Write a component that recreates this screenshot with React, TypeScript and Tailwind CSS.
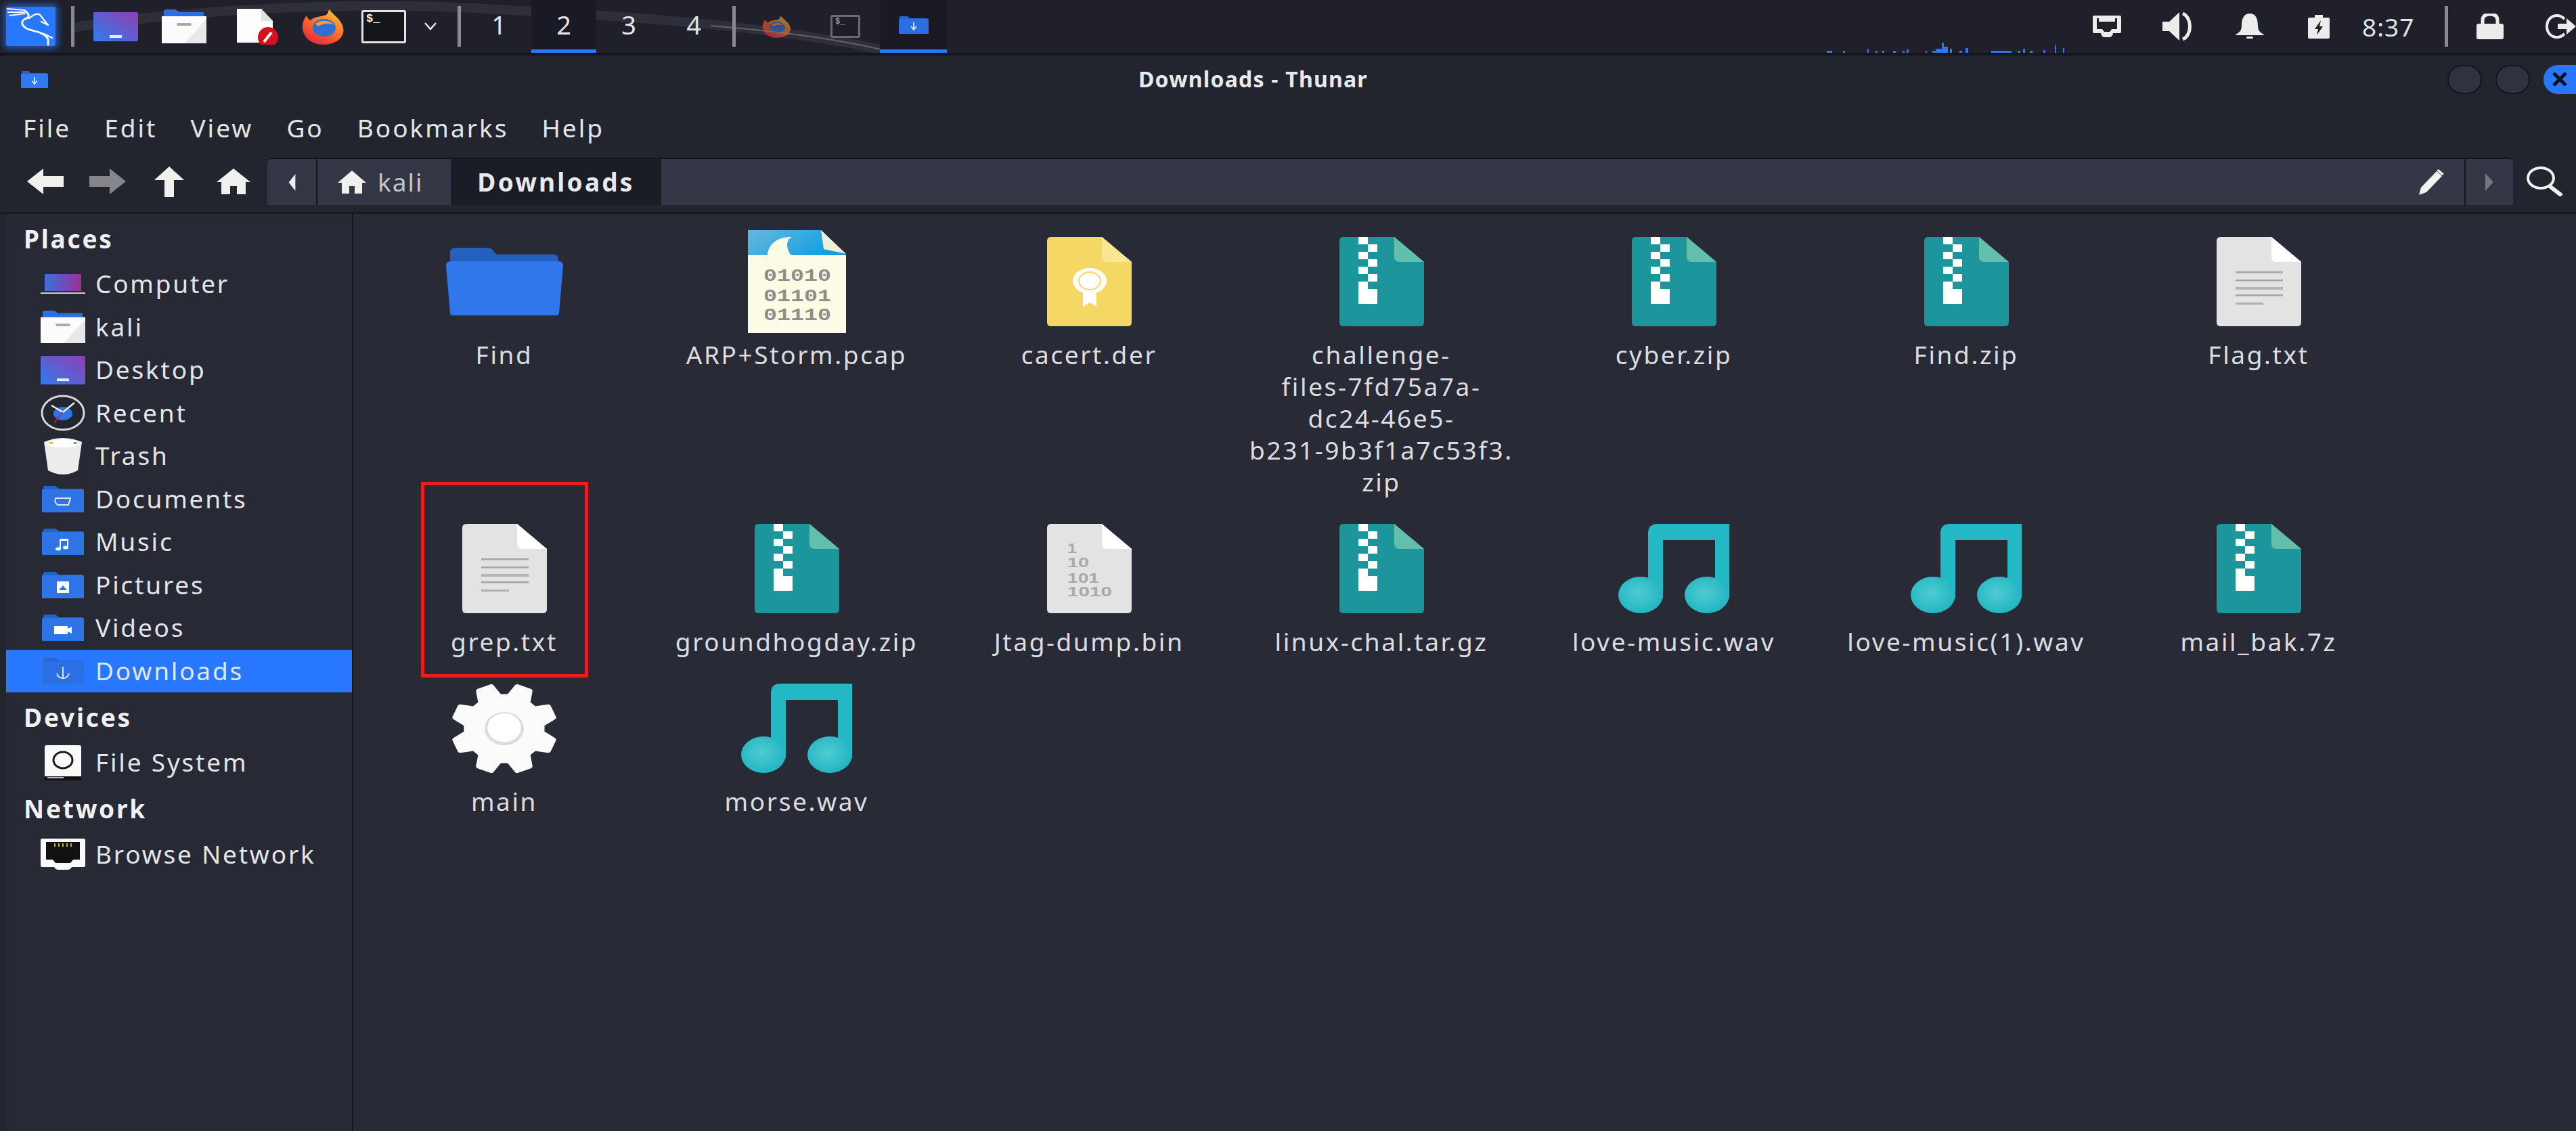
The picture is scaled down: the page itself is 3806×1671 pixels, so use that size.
import React from 'react';

// ---------- small shared icons ----------
const Stretch: React.FC<{ w: number; h: number; vw?: number; vh?: number; className?: string; children: React.ReactNode }> = ({ w, h, vw, vh, className, children }) => (
  <svg width={w} height={h} viewBox={`0 0 ${vw ?? w} ${vh ?? h}`} preserveAspectRatio="none" className={`block shrink-0 ${className ?? ''}`}>
    {children}
  </svg>
);

const KaliLogo = () => (
  <div className="w-[73px] h-[58px] bg-[#2777ff] rounded-[3px] shadow-[0_0_10px_4px_rgba(39,119,255,0.6)] ml-[9px] shrink-0">
    <Stretch w={73} h={58}>
      <g fill="none" stroke="#f4f7ff" strokeLinecap="round" strokeLinejoin="round">
        <path d="M2 3 L28 5 M3 8 L27 8 M5 13 L28 10" strokeWidth="2" />
        <path d="M28 6 C36 12 34 16 28 18 C22 21 22 27 30 32 C40 37 56 36 62 48 L62 56" strokeWidth="3" />
        <path d="M34 17 C42 11 46 9 50 12 L62 27 L52 22 M56 40 L68 46" strokeWidth="2.5" />
      </g>
    </Stretch>
  </div>
);

const Sep = ({ ml }: { ml: string }) => <div className={`w-[5px] h-[60px] bg-[#8a8b90] shrink-0 ${ml}`} />;

const DesktopIcon = ({ w, h }: { w: number; h: number }) => (
  <Stretch w={w} h={h} vw={66} vh={43}>
    <defs>
      <linearGradient id="dsk" x1="0" y1="1" x2="1" y2="0">
        <stop offset="0" stopColor="#2f7cf0" />
        <stop offset="1" stopColor="#8f3fb0" />
      </linearGradient>
    </defs>
    <rect width="66" height="43" rx="2" fill="url(#dsk)" />
    <rect x="24" y="34" width="18" height="4" fill="#e8ecff" />
  </Stretch>
);

const HomeFolder = ({ w, h }: { w: number; h: number }) => (
  <Stretch w={w} h={h} vw={66} vh={50}>
    <path d="M3 12 V3 Q3 0 6 0 H20 L26 4 H62 V12 Z" fill="#2b6fe0" />
    <rect y="10" width="66" height="40" fill="#fbfbfb" />
    <path d="M66 14 V50 H34 Z" fill="#e8e8e8" />
    <rect x="22" y="20" width="22" height="4" rx="2" fill="#a9a9a9" />
  </Stretch>
);

const DocBadge = () => (
  <Stretch w={61} h={53}>
    <path d="M0 0 H36 L53 18 V50 H0 Z" fill="#fdfdfd" />
    <path d="M36 0 L53 18 H36 Z" fill="#e2e2e2" />
    <circle cx="46" cy="42" r="15" fill="#d3121e" />
    <path d="M40 49 L51 35" stroke="#fff" strokeWidth="4" />
  </Stretch>
);

const Firefox = ({ w, h, dim }: { w: number; h: number; dim?: boolean }) => (
  <Stretch w={w} h={h} vw={63} vh={53} className={dim ? 'opacity-60' : ''}>
    <defs>
      <linearGradient id={dim ? 'ffd' : 'ffn'} x1="0.8" y1="0" x2="0.2" y2="1">
        <stop offset="0" stopColor="#ffc93a" />
        <stop offset="0.5" stopColor="#ff6a2a" />
        <stop offset="1" stopColor="#e0263f" />
      </linearGradient>
    </defs>
    <path d="M40 0 C44 8 58 14 61 28 C64 44 48 53 32 53 C14 53 1 42 1 26 C1 20 3 15 7 10 C8 14 11 16 13 17 C18 11 28 12 36 9 C38 7 40 4 40 0 Z" fill={`url(#${dim ? 'ffd' : 'ffn'})`} />
    <ellipse cx="33" cy="28" rx="17" ry="13" fill="#2f6fd8" />
    <path d="M20 22 C28 16 42 16 48 24 C40 20 30 22 24 26 Z" fill="#ff9a2a" />
  </Stretch>
);

const Term = ({ w, h, dim }: { w: number; h: number; dim?: boolean }) => (
  <div style={{ width: w, height: h }} className={`shrink-0 rounded-[3px] border-[3px] ${dim ? 'border-[#6a6b70] bg-[#1d1e26]' : 'border-[#e4e4e4] bg-[#141518]'} relative`}>
    <span className={`absolute left-[4px] top-[1px] font-['Liberation_Mono',monospace] font-bold leading-none ${dim ? 'text-[12px] text-[#9a9a9a]' : 'text-[17px] text-white'}`}>$_</span>
  </div>
);

const DownloadFolder = ({ w, h, dim }: { w: number; h: number; dim?: boolean }) => (
  <Stretch w={w} h={h} vw={44} vh={26}>
    <path d="M1 6 V1 Q1 0 3 0 H13 L16 3 H42 V6 Z" fill={dim ? '#2667d8' : '#2460c8'} />
    <rect y="4" width="44" height="22" rx="1" fill={dim ? '#2a6ee2' : '#2f7af0'} />
    <path d="M22 9 V19 M18 15 L22 20 L26 15" stroke="#cfe0ff" strokeWidth="2" fill="none" />
  </Stretch>
);

const NetIcon = ({ w, h, fill = '#111' }: { w: number; h: number; fill?: string }) => (
  <Stretch w={w} h={h} vw={66} vh={46}>
    <path d="M2 0 H64 Q66 0 66 2 V40 Q66 42 64 42 H46 Q44 46 40 46 H26 Q22 46 20 42 H2 Q0 42 0 40 V2 Q0 0 2 0 Z" fill="#fafafa" />
    <path d="M8 5 H58 V31 H48 L44 36 H22 L18 31 H8 Z" fill={fill} />
    {[20, 26, 32, 38, 44].map((x) => (
      <rect key={x} x={x} y="7" width="2" height="5" fill="#c8a83c" />
    ))}
  </Stretch>
);

const Bars = () => {
  const bars = [[0, 8, 3], [24, 3, 3], [60, 2, 6], [72, 3, 3], [82, 3, 3], [98, 4, 3], [112, 3, 3], [118, 3, 5], [146, 2, 3], [156, 5, 3], [161, 10, 6], [170, 3, 15], [173, 6, 9], [182, 3, 6], [196, 4, 3], [205, 4, 7], [243, 16, 3], [259, 14, 3], [282, 4, 3], [290, 3, 6], [300, 4, 3], [320, 3, 4], [337, 2, 12], [349, 2, 7]];
  return (
    <Stretch w={355} h={78} className="ml-[1300px]">
      {bars.map(([x, w, h]) => (
        <rect key={x} x={x} y={78 - h} width={w} height={h} fill="#2777ff" />
      ))}
    </Stretch>
  );
};

// ---------- big file icons ----------
const FolderBig = () => (
  <Stretch w={173} h={100}>
    <path d="M6 30 V8 Q6 0 14 0 H62 Q68 0 72 8 L76 10 H160 Q166 10 166 20 V30 Z" fill="#2460c0" />
    <path d="M0 26 Q0 20 8 20 H166 Q173 20 173 26 L167 96 Q167 100 163 100 H10 Q6 100 6 96 Z" fill="#3077ec" />
  </Stretch>
);

const Page = ({ body, fold, children }: { body: string; fold: string; children?: React.ReactNode }) => (
  <Stretch w={125} h={132}>
    <path d="M6 0 H81 L125 37 V126 Q125 132 119 132 H6 Q0 132 0 126 V6 Q0 0 6 0 Z" fill={body} />
    <path d="M81 0 L125 37 H89 Q81 37 81 29 Z" fill={fold} />
    {children}
  </Stretch>
);

const TextDoc = () => (
  <Page body="#e3e3e3" fold="#ffffff">
    {[51, 63, 74, 85].map((y) => (
      <rect key={y} x="28" y={y} width="70" height={y === 74 ? 4 : 2.5} fill={y === 74 ? '#b5b5b5' : '#a5a5a5'} />
    ))}
    <rect x="28" y="97" width="41" height="3" fill="#b0b0b0" />
  </Page>
);

const ZipDoc = () => (
  <Page body="#1c959c" fold="#62bfab">
    {[0, 22, 44, 66].map((y) => (
      <rect key={y} x="28" y={y} width="14" height="11" fill="#fff" />
    ))}
    {[11, 33, 55].map((y) => (
      <rect key={y} x="42" y={y} width="14" height="11" fill="#fff" />
    ))}
    <rect x="28" y="77" width="28" height="22" fill="#fff" />
  </Page>
);

const BinDoc = () => (
  <Page body="#e3e3e3" fold="#ffffff">
    <g fontFamily="'Liberation Sans',sans-serif" fontWeight="700" fontSize="20" fill="#a9a9a9">
      <text x="30" y="43" textLength={14} lengthAdjust="spacingAndGlyphs">1</text>
      <text x="30" y="64" textLength={32} lengthAdjust="spacingAndGlyphs">10</text>
      <text x="30" y="87" textLength={47} lengthAdjust="spacingAndGlyphs">101</text>
      <text x="30" y="107" textLength={66} lengthAdjust="spacingAndGlyphs">1010</text>
    </g>
  </Page>
);

const CertDoc = () => (
  <Page body="#f5d863" fold="#f8e692">
    <ellipse cx="63" cy="65" rx="25" ry="19" fill="#fff" />
    <ellipse cx="63" cy="65" rx="16" ry="13" fill="none" stroke="#f5d863" strokeWidth="2" />
    <path d="M53 80 H73 V103 L63 97 L53 103 Z" fill="#fff" />
  </Page>
);

const PcapDoc = () => (
  <Stretch w={145} h={152}>
    <defs>
      <linearGradient id="pc" x1="0" y1="0" x2="1" y2="0.4">
        <stop offset="0" stopColor="#68b7dc" />
        <stop offset="1" stopColor="#12a0e4" />
      </linearGradient>
    </defs>
    <path d="M0 0 H108 L145 37 V152 H0 Z" fill="#fbfbe6" />
    <path d="M0 0 H108 L145 37 H0 Z" fill="url(#pc)" />
    <path d="M108 0 L145 35 L112 28 Z" fill="#f0efdc" />
    <path d="M29 37 C30 20 44 10 65 10 C54 16 58 30 64 37 Z" fill="#fbfbe6" />
    <g fontFamily="'Liberation Mono',monospace" fontWeight="700" fontSize="26" fill="#8d8d8a">
      <text x="23" y="75" textLength={100} lengthAdjust="spacingAndGlyphs">01010</text>
      <text x="23" y="105" textLength={100} lengthAdjust="spacingAndGlyphs">01101</text>
      <text x="23" y="133" textLength={100} lengthAdjust="spacingAndGlyphs">01110</text>
    </g>
  </Stretch>
);

const MusicDoc = ({ id }: { id: string }) => (
  <Stretch w={164} h={132}>
    <defs>
      <radialGradient id={id} cx="0.45" cy="0.45" r="0.6">
        <stop offset="0" stopColor="#4fcbd3" />
        <stop offset="1" stopColor="#1fb4c0" />
      </radialGradient>
    </defs>
    <path d="M44 110 V14 Q44 0 58 0 H164 V110 H143 V24 H66 V110 Z" fill="#22b9c4" />
    <ellipse cx="33" cy="105" rx="33" ry="27" fill={`url(#${id})`} />
    <ellipse cx="131" cy="105" rx="33" ry="27" fill={`url(#${id})`} />
  </Stretch>
);

const gearPath = (() => {
  const pts: string[] = [];
  const teeth = 8;
  for (let i = 0; i < teeth; i++) {
    const a = (i / teeth) * Math.PI * 2 + Math.PI / 8;
    const step = (Math.PI * 2) / teeth;
    const rows: [number, number][] = [[-0.34, 35], [-0.17, 47], [0.17, 47], [0.34, 35]];
    rows.forEach(([o, r]) => {
      const t = a + o * step;
      pts.push(`${(50 + r * Math.cos(t)).toFixed(1)} ${(50 + r * Math.sin(t)).toFixed(1)}`);
    });
  }
  return `M${pts.join(' L')} Z`;
})();

const Gear = () => (
  <Stretch w={160} h={137} vw={100} vh={100}>
    <path d={gearPath} fill="#fbfbfb" stroke="#fbfbfb" strokeWidth="5" strokeLinejoin="round" />
    <circle cx="50" cy="50" r="18" fill="#dcdcdc" />
    <circle cx="50" cy="49" r="15.5" fill="#fff" />
  </Stretch>
);

const files: { name: string; icon: React.ReactNode; marked?: boolean }[] = [
  { name: 'Find', icon: <FolderBig /> },
  { name: 'ARP+Storm.pcap', icon: <PcapDoc /> },
  { name: 'cacert.der', icon: <CertDoc /> },
  { name: 'challenge-\nfiles-7fd75a7a-\ndc24-46e5-\nb231-9b3f1a7c53f3.\nzip', icon: <ZipDoc /> },
  { name: 'cyber.zip', icon: <ZipDoc /> },
  { name: 'Find.zip', icon: <ZipDoc /> },
  { name: 'Flag.txt', icon: <TextDoc /> },
  { name: 'grep.txt', icon: <TextDoc />, marked: true },
  { name: 'groundhogday.zip', icon: <ZipDoc /> },
  { name: 'Jtag-dump.bin', icon: <BinDoc /> },
  { name: 'linux-chal.tar.gz', icon: <ZipDoc /> },
  { name: 'love-music.wav', icon: <MusicDoc id="mu1" /> },
  { name: 'love-music(1).wav', icon: <MusicDoc id="mu2" /> },
  { name: 'mail_bak.7z', icon: <ZipDoc /> },
  { name: 'main', icon: <Gear /> },
  { name: 'morse.wav', icon: <MusicDoc id="mu3" /> },
];

// ---------- sidebar ----------
const SideFolder = ({ glyph }: { glyph: React.ReactNode }) => (
  <Stretch w={62} h={39} vw={62} vh={39}>
    <path d="M2 6 V2 Q2 0 4 0 H20 L25 4 H60 V8 H2 Z" fill="#2563cc" />
    <rect y="5" width="62" height="34" rx="1" fill="#2f74e6" />
    {glyph}
  </Stretch>
);

const places: { label: string; icon: React.ReactNode; active?: boolean }[] = [
  {
    label: 'Computer',
    icon: (
      <Stretch w={66} h={30}>
        <defs>
          <linearGradient id="cmp" x1="0" y1="0" x2="1" y2="0">
            <stop offset="0" stopColor="#3c6fdc" />
            <stop offset="1" stopColor="#9a3294" />
          </linearGradient>
        </defs>
        <rect x="6" y="0" width="54" height="25" fill="url(#cmp)" />
        <rect y="27" width="66" height="2" fill="#cfcfd2" />
      </Stretch>
    ),
  },
  { label: 'kali', icon: <HomeFolder w={66} h={48} /> },
  { label: 'Desktop', icon: <DesktopIcon w={66} h={42} /> },
  {
    label: 'Recent',
    icon: (
      <Stretch w={66} h={54} vw={66} vh={54}>
        <ellipse cx="33" cy="27" rx="31" ry="25" fill="#23252f" stroke="#d8d8d8" strokeWidth="3" />
        <ellipse cx="33" cy="28" rx="14" ry="10" fill="#2f74e6" />
        <path d="M16 16 L33 26 L50 12" stroke="#eee" strokeWidth="2.5" fill="none" />
        <path d="M33 26 L20 42" stroke="#b02a3a" strokeWidth="1.5" />
      </Stretch>
    ),
  },
  {
    label: 'Trash',
    icon: (
      <Stretch w={56} h={54} vw={56} vh={54}>
        <path d="M0 6 Q28 -6 56 6 L50 48 Q28 60 6 48 Z" fill="#ececea" />
        <ellipse cx="28" cy="8" rx="24" ry="6" fill="#fff" />
        <rect x="8" y="6" width="5" height="3" fill="#e0c040" />
        <rect x="44" y="6" width="4" height="3" fill="#3cb0b8" />
      </Stretch>
    ),
  },
  {
    label: 'Documents',
    icon: <SideFolder glyph={<path d="M20 18 H42 L39 28 H23 Q18 24 20 18 Z" fill="none" stroke="#d8e4ff" strokeWidth="2" />} />,
  },
  {
    label: 'Music',
    icon: (
      <SideFolder
        glyph={
          <g fill="#fff">
            <rect x="26" y="16" width="2" height="14" />
            <rect x="37" y="16" width="2" height="12" />
            <rect x="26" y="15" width="13" height="3" />
            <ellipse cx="24" cy="30" rx="4" ry="2.5" />
            <ellipse cx="35" cy="28" rx="4" ry="2.5" />
          </g>
        }
      />
    ),
  },
  {
    label: 'Pictures',
    icon: (
      <SideFolder
        glyph={
          <g>
            <rect x="22" y="14" width="18" height="17" fill="#fff" />
            <path d="M25 27 L31 20 L37 27 Z" fill="#2f74e6" />
          </g>
        }
      />
    ),
  },
  {
    label: 'Videos',
    icon: (
      <SideFolder
        glyph={
          <g fill="#fff">
            <rect x="18" y="17" width="20" height="12" />
            <path d="M38 21 L44 18 V28 L38 25 Z" />
          </g>
        }
      />
    ),
  },
  {
    label: 'Downloads',
    active: true,
    icon: (
      <Stretch w={62} h={39} vw={62} vh={39}>
        <path d="M2 6 V2 Q2 0 4 0 H20 L25 4 H60 V8 H2 Z" fill="#2a66d2" />
        <rect y="5" width="62" height="34" rx="1" fill="#2c6fe4" />
        <path d="M31 13 V29 M22 23 Q24 30 31 30 Q38 30 40 23" stroke="#d8e4ff" strokeWidth="2" fill="none" />
      </Stretch>
    ),
  },
];

const SideRow = ({ label, icon, active }: { label: string; icon: React.ReactNode; active?: boolean }) => (
  <div className={`h-[63.5px] flex items-center pl-[51px] ${active ? 'bg-[#2777ff]' : ''}`}>
    <div className="w-[66px] flex justify-center shrink-0">{icon}</div>
    <span className="ml-[15px] pb-[2px] text-[37px] tracking-[2.8px] leading-none text-[#e4e5e8]">{label}</span>
  </div>
);

const SideHead = ({ label }: { label: string }) => (
  <div className="h-[72px] flex items-center pl-[26px] text-[37px] tracking-[2.8px] font-bold leading-none text-[#f1f1f3]">{label}</div>
);

const Crumb = ({ children, className }: { children: React.ReactNode; className: string }) => (
  <div className={`h-full flex items-center shrink-0 ${className}`}>{children}</div>
);

export default function App() {
  return (
    <div className="w-[3806px] h-[1671px] overflow-hidden flex flex-col bg-[#23252e] font-['Noto_Sans',sans-serif] text-[#e4e5e8]">
      {/* top panel */}
      <div className="relative h-[78px] shrink-0 bg-[#1f2029] flex items-center">
        <svg width="1400" height="78" className="absolute left-0 top-0">
          <path d="M110 40 C300 12 550 0 750 15 C950 25 1150 40 1310 75" fill="none" stroke="#ffffff" strokeOpacity="0.07" strokeWidth="14" />
          <path d="M1050 38 C1150 46 1240 58 1310 75" fill="none" stroke="#ffffff" strokeOpacity="0.25" strokeWidth="2" />
        </svg>
        <div className="relative flex items-center h-full w-full">
          <KaliLogo />
          <Sep ml="ml-[23px]" />
          <div className="ml-[28px]"><DesktopIcon w={66} h={43} /></div>
          <div className="ml-[35px]"><HomeFolder w={66} h={50} /></div>
          <div className="ml-[45px]"><DocBadge /></div>
          <div className="ml-[35px]"><Firefox w={63} h={53} /></div>
          <div className="ml-[25px]"><Term w={66} h={49} /></div>
          <svg width="20" height="12" viewBox="0 0 20 12" className="ml-[26px] shrink-0">
            <path d="M2 1 L10 10 L18 1" fill="none" stroke="#e6e6e6" strokeWidth="2.5" />
          </svg>
          <Sep ml="ml-[30px]" />
          <div className="ml-[8px] flex h-full text-[38px]">
            {['1', '2', '3', '4'].map((n) => (
              <div key={n} className={`w-[96px] h-full flex items-center justify-center border-b-[5px] ${n === '2' ? 'bg-[#191a23] border-[#2777ff]' : 'border-transparent'}`}>
                {n}
              </div>
            ))}
          </div>
          <Sep ml="ml-[9px]" />
          <div className="ml-[39px]"><Firefox w={43} h={33} dim /></div>
          <div className="ml-[58px]"><Term w={44} h={34} dim /></div>
          <div className="ml-[29px] w-[99px] h-full bg-[#191a23] border-b-[5px] border-[#2777ff] flex items-center justify-center shrink-0">
            <DownloadFolder w={44} h={26} dim />
          </div>
          <Bars />
          <div className="ml-[38px]">
            <Stretch w={42} h={32} vw={42} vh={32}>
              <path d="M2 0 H40 Q42 0 42 2 V24 Q42 26 40 26 H30 Q29 32 24 32 H18 Q13 32 12 26 H2 Q0 26 0 24 V2 Q0 0 2 0 Z" fill="#ececec" />
              <path d="M6 4 H36 V20 H28 L25 24 H17 L14 20 H6 Z" fill="#1f2029" />
              <path d="M9 4 H33 V9 H9 Z" fill="#ececec" />
            </Stretch>
          </div>
          <div className="ml-[61px]">
            <Stretch w={53} h={42} vw={53} vh={42}>
              <path d="M0 14 H10 L25 0 V42 L10 28 H0 Z" fill="#ececec" />
              <path d="M30 2 C44 8 44 34 30 40" fill="none" stroke="#ececec" strokeWidth="5" />
            </Stretch>
          </div>
          <div className="ml-[54px]">
            <Stretch w={44} h={38} vw={44} vh={38}>
              <path d="M22 0 C32 0 34 10 34 18 C34 26 38 28 44 32 H0 C6 28 10 26 10 18 C10 10 12 0 22 0 Z" fill="#ececec" />
              <rect x="17" y="34" width="10" height="3" rx="1.5" fill="#ececec" />
            </Stretch>
          </div>
          <div className="ml-[64px]">
            <Stretch w={32} h={35} vw={32} vh={35}>
              <path d="M2 4 H10 V0 H22 V4 H30 Q32 4 32 6 V33 Q32 35 30 35 H2 Q0 35 0 33 V6 Q0 4 2 4 Z" fill="#ececec" />
              <path d="M19 8 L10 21 H15 L13 30 L22 17 H17 Z" fill="#1f2029" />
            </Stretch>
          </div>
          <div className="ml-[48px] w-[85px] text-[37px] leading-none text-[#dfe3ea] tracking-[1px] shrink-0">8:37</div>
          <Sep ml="ml-[37px]" />
          <div className="ml-[42px]">
            <Stretch w={40} h={38} vw={40} vh={38}>
              <path d="M9 17 V10 C9 3 14 1 20 1 C26 1 31 3 31 10 V17" fill="none" stroke="#ececec" strokeWidth="5" />
              <rect y="15" width="40" height="23" rx="3" fill="#ececec" />
            </Stretch>
          </div>
          <div className="ml-[62px]">
            <Stretch w={45} h={36} vw={45} vh={36}>
              <path d="M28 7 C24 3 20 2 17 2 C8 2 2 9 2 18 C2 27 8 34 17 34 C20 34 24 33 28 29" fill="none" stroke="#ececec" strokeWidth="4" />
              <path d="M18 14 H31 V6 L45 18 L31 30 V22 H18 Z" fill="#ececec" />
            </Stretch>
          </div>
        </div>
      </div>
      <div className="h-[4px] shrink-0 bg-[#14151b]" />

      {/* thunar title bar */}
      <div className="h-[70px] shrink-0 flex items-center rounded-tl-[6px]">
        <div className="ml-[31px]"><DownloadFolder w={40} h={25} /></div>
        <div className="ml-[1611px] text-[32px] tracking-[1.2px] font-bold leading-none text-[#e8e9ec] whitespace-nowrap">Downloads - Thunar</div>
        <div className="ml-auto flex gap-[20px]">
          <div className="w-[51px] h-[43px] rounded-full bg-[#30333f] border-2 border-[#14151b]" />
          <div className="w-[51px] h-[43px] rounded-full bg-[#30333f] border-2 border-[#14151b]" />
          <div className="w-[48px] h-[43px] rounded-l-full bg-[#2777ff] flex items-center justify-center text-[#0d0f16]">
            <svg width="24" height="24" viewBox="0 0 24 24"><path d="M3 3 L21 21 M21 3 L3 21" stroke="currentColor" strokeWidth="5" /></svg>
          </div>
        </div>
      </div>

      {/* menu bar */}
      <div className="h-[81px] shrink-0 pb-[8px] pl-[34px] flex items-center gap-[49px] text-[37px] tracking-[3px] leading-none">
        {['File', 'Edit', 'View', 'Go', 'Bookmarks', 'Help'].map((m) => (
          <span key={m}>{m}</span>
        ))}
      </div>

      {/* toolbar */}
      <div className="h-[83px] shrink-0 border-b-2 border-[#14151b] flex items-start">
        <div className="h-[70px] flex items-center pl-[40px]">
          <Stretch w={54} h={38} vw={54} vh={38}>
            <path d="M0 19 L24 0 V11 H54 V27 H24 V38 Z" fill="#f0f0ee" />
          </Stretch>
          <div className="ml-[38px]">
            <Stretch w={54} h={38} vw={54} vh={38}>
              <path d="M54 19 L30 0 V11 H0 V27 H30 V38 Z" fill="#85868c" />
            </Stretch>
          </div>
          <div className="ml-[42px]">
            <Stretch w={44} h={45} vw={44} vh={45}>
              <path d="M22 0 L44 20 H29 V45 H15 V20 H0 Z" fill="#f0f0ee" />
            </Stretch>
          </div>
          <div className="ml-[48px]">
            <Stretch w={50} h={38} vw={50} vh={38}>
              <path d="M25 0 L50 20 H43 V38 H30 V26 H20 V38 H7 V20 H0 Z" fill="#f0f0ee" />
            </Stretch>
          </div>
        </div>
        <div className="ml-[25px] h-[70px] w-[3318px] flex rounded-t-[6px] overflow-hidden border-t-2 border-[#14151b] bg-[#333644]">
          <Crumb className="w-[74px] justify-center border-r-2 border-[#14151b]">
            <svg width="13" height="25" viewBox="0 0 16 26" preserveAspectRatio="none"><path d="M14 0 V26 L2 13 Z" fill="#eeeeee" /></svg>
          </Crumb>
          <Crumb className="w-[197px] pl-[30px] text-[#c4c6cc] text-[37px] tracking-[2px]">
            <svg width="42" height="34" viewBox="0 0 42 34" className="shrink-0"><path d="M21 0 L42 18 H36 V34 H25 V23 H17 V34 H6 V18 H0 Z" fill="#f0f0ee" /></svg>
            <span className="ml-[17px] pb-[2px] leading-none">kali</span>
          </Crumb>
          <Crumb className="w-[311px] justify-center bg-[#1b1d26] font-bold text-[37px] tracking-[3.2px] text-[#e8e9ec]">
            <span className="pb-[2px] leading-none">Downloads</span>
          </Crumb>
          <div className="flex-1 flex items-center justify-end pr-[30px]">
            <svg width="37" height="38" viewBox="0 0 37 38"><path d="M0 38 L3 27 L26 3 L34 10 L11 34 Z M29 0 L37 7 L34 9 L26 2 Z" fill="#f2f2f2" /></svg>
          </div>
          <Crumb className="w-[72px] justify-center border-l-2 border-[#14151b]">
            <svg width="16" height="26" viewBox="0 0 16 26"><path d="M2 0 V26 L14 13 Z" fill="#75767c" /></svg>
          </Crumb>
        </div>
        <div className="ml-[20px] h-[70px] flex items-center">
          <svg width="53" height="44" viewBox="0 0 53 44" fill="none" stroke="#f0f0ee">
            <ellipse cx="21" cy="17" rx="19" ry="15" strokeWidth="4" />
            <path d="M34 29 L52 43" strokeWidth="6" />
          </svg>
        </div>
      </div>

      {/* body */}
      <div className="flex-1 flex min-h-0">
        <div className="ml-[9px] w-[511px] bg-[#272935] shrink-0">
          <SideHead label="Places" />
          {places.map((p) => (
            <SideRow key={p.label} {...p} />
          ))}
          <SideHead label="Devices" />
          <SideRow
            label="File System"
            icon={
              <Stretch w={54} h={52} vw={54} vh={52}>
                <rect width="54" height="50" rx="3" fill="#fafafa" />
                <ellipse cx="27" cy="22" rx="14" ry="12" fill="none" stroke="#1a1a1a" strokeWidth="3" />
                <rect y="46" width="54" height="6" fill="#111" />
                <rect x="4" y="47" width="24" height="2" fill="#bbb" />
              </Stretch>
            }
          />
          <SideHead label="Network" />
          <SideRow label="Browse Network" icon={<NetIcon w={66} h={46} />} />
        </div>
        <div className="w-[2px] bg-[#14151b] shrink-0" />
        <div className="flex-1 bg-[#282a36] pl-[7px] pt-[16px]">
          <div className="grid grid-cols-[repeat(7,432px)] items-start">
            {files.map((f) => (
              <div key={f.name} className="relative flex flex-col items-center pb-[21px]">
                <div className="h-[168px] w-full flex items-center justify-center">{f.icon}</div>
                <div className="whitespace-pre-line text-center text-[37px] tracking-[2.6px] leading-[47px] text-[#dcdde1]">{f.name}</div>
                {f.marked && <div className="absolute left-[93px] top-[-44px] w-[247px] h-[289px] border-[5px] border-[#ed1c24]" />}
              </div>
            ))}
          </div>
        </div>
      </div>
    </div>
  );
}
